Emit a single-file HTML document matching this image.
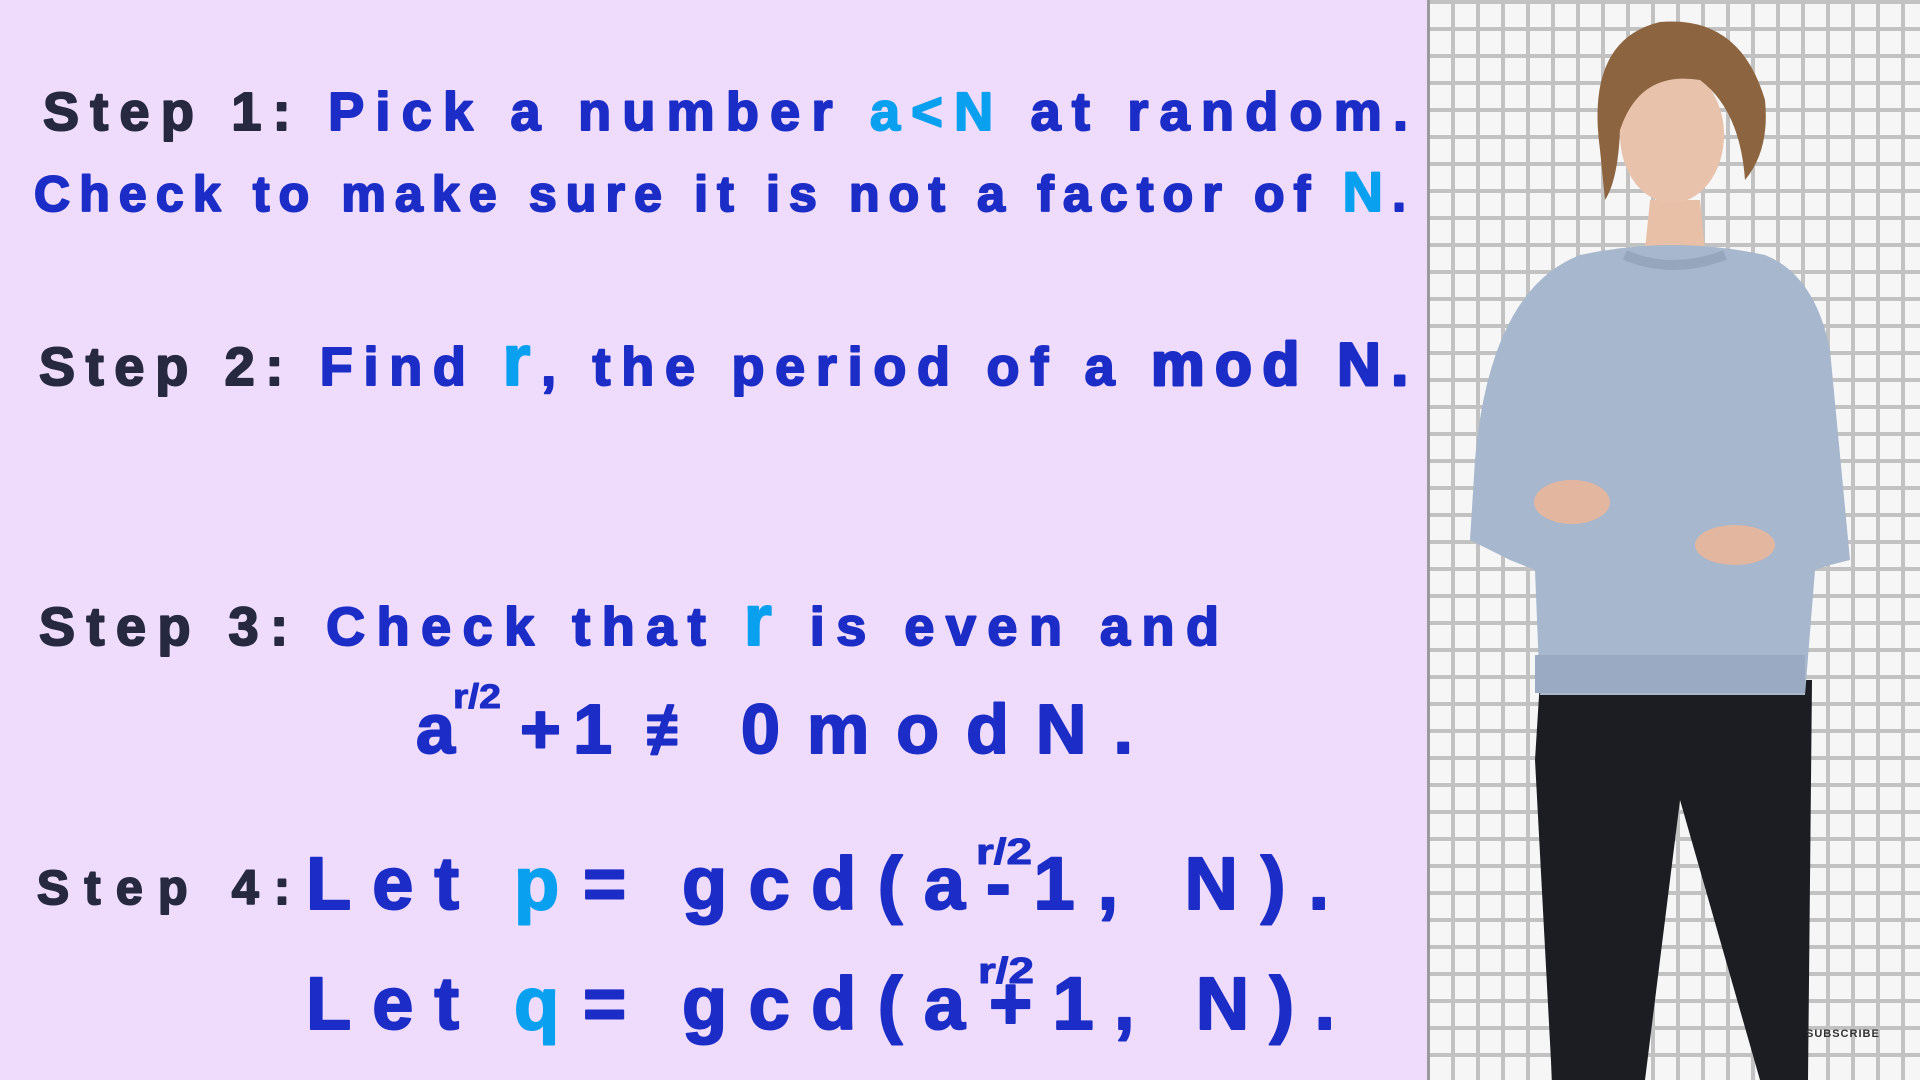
<!DOCTYPE html>
<html><head><meta charset="utf-8"><style>
html,body{margin:0;padding:0;width:1920px;height:1080px;overflow:hidden;background:#efdcfd}
.right{position:absolute;left:1427px;top:0;width:493px;height:1080px;background-color:#f6f6f6;
background-image:repeating-linear-gradient(90deg,transparent 0 21px,#c2c2c2 21px 25px),repeating-linear-gradient(0deg,transparent 0 23px,#c2c2c2 23px 27px);border-left:3px solid #9a9a9a}
svg{position:absolute;left:0;top:0}
text{font-family:"Liberation Sans","DejaVu Sans",sans-serif;font-weight:bold}
.b{stroke:currentColor;stroke-width:2.2;stroke-linejoin:round}
</style></head><body>
<div class="right"></div>
<svg width="1920" height="1080" viewBox="0 0 1920 1080">
<g fill="#1c2cc6" stroke="#1c2cc6" stroke-width="2" stroke-linejoin="round">
<text x="43" y="130" font-size="54" textLength="1365" lengthAdjust="spacing"><tspan fill="#262940" stroke="#262940">Step 1: </tspan>Pick a number <tspan fill="#0aa0f0" stroke="#0aa0f0">a&lt;N</tspan> at random.</text>
<text x="34" y="211" font-size="50" textLength="1372" lengthAdjust="spacing">Check to make sure it is not a factor of <tspan fill="#0aa0f0" stroke="#0aa0f0" font-size="56">N</tspan>.</text>
<text x="39" y="385" font-size="54" textLength="1369" lengthAdjust="spacing"><tspan fill="#262940" stroke="#262940">Step 2: </tspan>Find <tspan fill="#0aa0f0" stroke="#0aa0f0" font-size="72">r</tspan>, the period of a <tspan font-size="60" stroke-width="3">mod N.</tspan></text>
<text x="39" y="645" font-size="54" textLength="1180" lengthAdjust="spacing"><tspan fill="#262940" stroke="#262940">Step 3: </tspan>Check that <tspan fill="#0aa0f0" stroke="#0aa0f0" font-size="72">r</tspan> is even and</text>
<text x="416" y="753" font-size="70">a</text>
<text x="453" y="708" font-size="34" stroke-width="1" textLength="48" lengthAdjust="spacingAndGlyphs">r/2</text>
<text x="520" y="753" font-size="70" textLength="92" lengthAdjust="spacing">+1</text>
<text x="645" y="753" font-size="70" textLength="59" lengthAdjust="spacingAndGlyphs">≢</text>
<text x="741" y="753" font-size="70" textLength="392" lengthAdjust="spacing">0modN.</text>
<text x="37" y="904" font-size="48" fill="#262940" stroke="#262940" textLength="253" lengthAdjust="spacing">Step 4:</text>
<text x="306" y="909" font-size="74" textLength="153" lengthAdjust="spacing">Let</text>
<text x="514" y="909" font-size="74" fill="#0aa0f0" stroke="#0aa0f0">p</text>
<text x="583" y="909" font-size="74">=</text>
<text x="682" y="909" font-size="74" textLength="283" lengthAdjust="spacing">gcd(a</text>
<text x="976" y="864" font-size="36" stroke-width="1" textLength="56" lengthAdjust="spacingAndGlyphs">r/2</text>
<text x="986" y="909" font-size="74" textLength="343" lengthAdjust="spacing">-1, N).</text>
<text x="306" y="1029" font-size="74" textLength="153" lengthAdjust="spacing">Let</text>
<text x="514" y="1029" font-size="74" fill="#0aa0f0" stroke="#0aa0f0">q</text>
<text x="583" y="1029" font-size="74">=</text>
<text x="682" y="1029" font-size="74" textLength="283" lengthAdjust="spacing">gcd(a</text>
<text x="978" y="983" font-size="36" stroke-width="1" textLength="56" lengthAdjust="spacingAndGlyphs">r/2</text>
<text x="989" y="1029" font-size="74" textLength="346" lengthAdjust="spacing">+1, N).</text>
</g>
<!-- person -->
<path d="M1540 680 L1812 680 L1808 1080 L1760 1080 L1680 800 L1645 1080 L1552 1080 L1535 760 Z" fill="#1b1d22"/>
<path d="M1650 200 L1700 200 L1705 250 L1645 250 Z" fill="#e8c0a8"/>
<path d="M1580 255 Q1672 235 1765 255 Q1815 275 1830 350 L1850 560 L1830 565 L1815 570 L1805 695 L1540 695 L1535 570 L1510 560 L1470 540 L1475 460 Q1490 290 1580 255 Z" fill="#a7b7cd"/>
<path d="M1625 255 Q1672 275 1725 255" stroke="#95a6bd" stroke-width="10" fill="none"/>
<rect x="1535" y="655" width="270" height="38" fill="#9aaac2"/>
<ellipse cx="1572" cy="502" rx="38" ry="22" fill="#e3b6a0"/>
<ellipse cx="1735" cy="545" rx="40" ry="20" fill="#e3b6a0"/>
<ellipse cx="1672" cy="135" rx="52" ry="68" fill="#e8c2ab"/>
<path d="M1600 150 Q1585 40 1660 22 Q1740 15 1765 100 Q1770 150 1745 180 Q1740 110 1700 80 Q1640 70 1620 130 Q1618 180 1605 200 Z" fill="#8d6440"/>
<text x="1806" y="1037" font-size="11" fill="#333" letter-spacing="1">SUBSCRIBE</text>
</svg>
</body></html>
